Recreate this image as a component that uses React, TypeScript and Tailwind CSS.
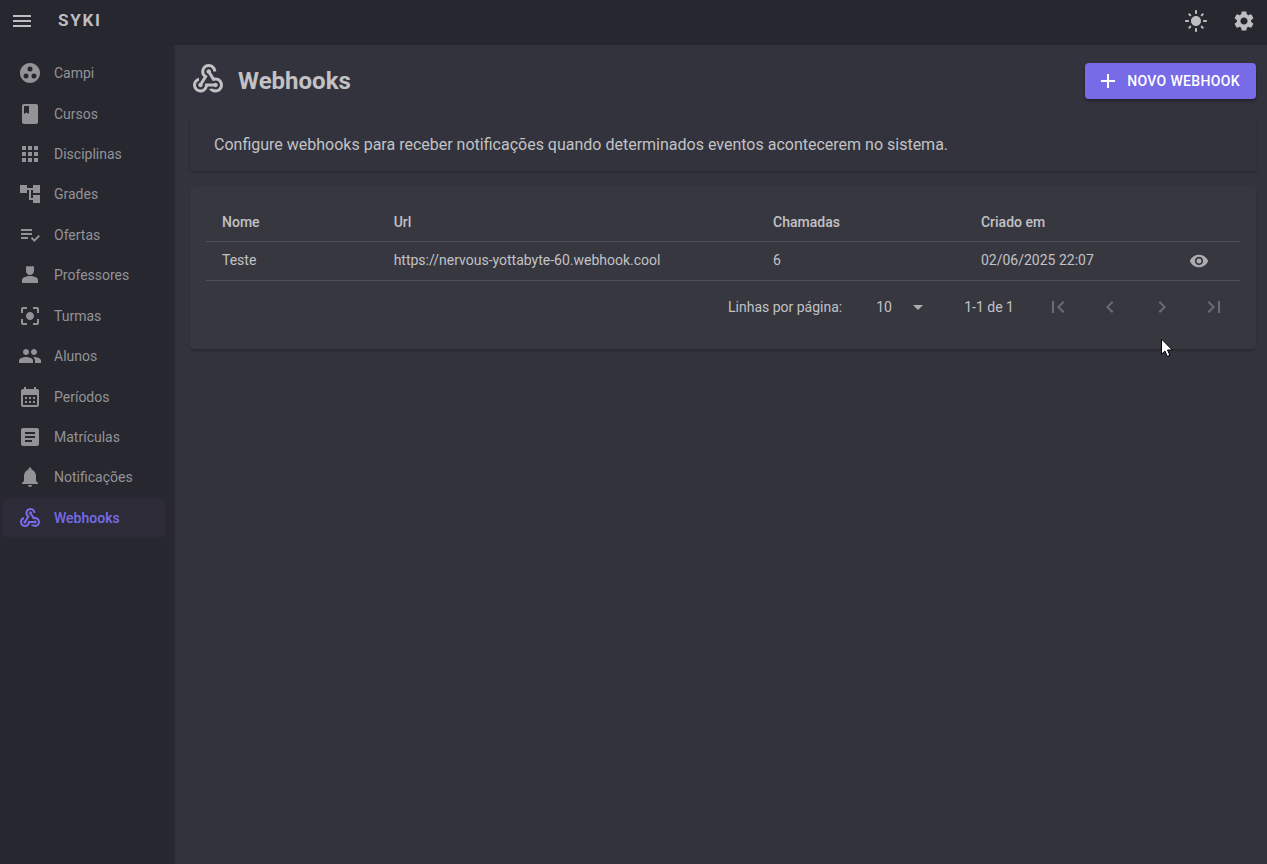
import type { ReactNode } from "react";
import type { IconType } from "react-icons";
import {
  MdAccountTree,
  MdAdd,
  MdApps,
  MdArrowDropDown,
  MdArticle,
  MdBook,
  MdCalendarMonth,
  MdCenterFocusStrong,
  MdChevronLeft,
  MdChevronRight,
  MdFirstPage,
  MdGroupWork,
  MdLastPage,
  MdLightMode,
  MdMenu,
  MdNotifications,
  MdPeople,
  MdPerson4,
  MdPlaylistAddCheck,
  MdSettings,
  MdVisibility,
  MdWebhook,
} from "react-icons/md";

const navItems: { label: string; icon: IconType }[] = [
  { label: "Campi", icon: MdGroupWork },
  { label: "Cursos", icon: MdBook },
  { label: "Disciplinas", icon: MdApps },
  { label: "Grades", icon: MdAccountTree },
  { label: "Ofertas", icon: MdPlaylistAddCheck },
  { label: "Professores", icon: MdPerson4 },
  { label: "Turmas", icon: MdCenterFocusStrong },
  { label: "Alunos", icon: MdPeople },
  { label: "Períodos", icon: MdCalendarMonth },
  { label: "Matrículas", icon: MdArticle },
  { label: "Notificações", icon: MdNotifications },
  { label: "Webhooks", icon: MdWebhook },
];

const activeItem = "Webhooks";

const webhooks = [
  { nome: "Teste", url: "https://nervous-yottabyte-60.webhook.cool", chamadas: 6, criadoEm: "02/06/2025 22:07" },
];

const pagerButtons: { label: string; icon: IconType }[] = [
  { label: "Primeira página", icon: MdFirstPage },
  { label: "Página anterior", icon: MdChevronLeft },
  { label: "Próxima página", icon: MdChevronRight },
  { label: "Última página", icon: MdLastPage },
];

function BarButton({ label, children }: { label: string; children: ReactNode }) {
  return (
    <button type="button" aria-label={label} className="flex size-10 items-center justify-center rounded-full">
      {children}
    </button>
  );
}

function TopBar() {
  return (
    <header className="flex h-[45px] shrink-0 items-center bg-[#27272f] pr-[3px] pb-[3px] pl-0.5 text-[#bebec1]">
      <BarButton label="Menu">
        <MdMenu className="size-6" />
      </BarButton>
      <span className="ml-4 text-[17px] font-bold tracking-widest">SYKI</span>
      <div className="ml-auto flex gap-2">
        <BarButton label="Tema claro">
          <MdLightMode className="size-6" />
        </BarButton>
        <BarButton label="Configurações">
          <MdSettings className="size-6" />
        </BarButton>
      </div>
    </header>
  );
}

function Sidebar() {
  return (
    <nav className="w-[174px] shrink-0 bg-[#27272f] pt-2 pr-2 pl-0.5 shadow-[0_1px_3px_rgba(0,0,0,0.3)]">
      <ul className="grid h-[485px] auto-rows-fr">
        {navItems.map(({ label, icon: Icon }) => (
          <li key={label} className="flex">
            <a
              href="#"
              aria-current={label === activeItem ? "page" : undefined}
              className={
                label === activeItem
                  ? "flex flex-1 items-center gap-3 rounded-md bg-[#2d2b38] px-4 text-sm font-medium text-[#776be7]"
                  : "flex flex-1 items-center gap-3 rounded-md px-4 text-sm text-[#939397]"
              }
            >
              <Icon className="size-6" />
              {label}
            </a>
          </li>
        ))}
      </ul>
    </nav>
  );
}

function WebhookTable() {
  return (
    <section className="mt-4 rounded bg-[#373740] p-4 text-sm shadow-[0_2px_2px_rgba(0,0,0,0.2)]">
      <table className="w-full table-fixed border-collapse text-left">
        <colgroup>
          <col className="w-[16.6%]" />
          <col className="w-[36.7%]" />
          <col className="w-[20.1%]" />
          <col className="w-[20.1%]" />
          <col />
        </colgroup>
        <thead>
          <tr className="h-[38px] border-b border-[#515155]">
            <th className="px-4 font-medium">Nome</th>
            <th className="px-4 font-medium">Url</th>
            <th className="px-4 font-medium">Chamadas</th>
            <th className="px-4 font-medium">Criado em</th>
            <th aria-label="Ações" />
          </tr>
        </thead>
        <tbody>
          {webhooks.map((hook) => (
            <tr key={hook.url} className="h-[39px] border-b border-[#515155]">
              <td className="px-4 pb-0.5">{hook.nome}</td>
              <td className="px-4 pb-0.5">{hook.url}</td>
              <td className="px-4 pb-0.5">{hook.chamadas}</td>
              <td className="px-4 pb-0.5">{hook.criadoEm}</td>
              <td className="px-4">
                <button type="button" aria-label="Visualizar" className="flex text-[#adadb1]">
                  <MdVisibility className="size-5" />
                </button>
              </td>
            </tr>
          ))}
        </tbody>
      </table>
      <div className="flex h-[52px] items-center justify-end pr-0.5">
        <label htmlFor="rows">Linhas por página:</label>
        <div className="ml-8 grid items-center">
          <select id="rows" className="col-start-1 row-start-1 h-8 w-14 appearance-none bg-transparent pl-0.5">
            <option>10</option>
          </select>
          <MdArrowDropDown className="pointer-events-none col-start-1 row-start-1 size-6 justify-self-end text-[#adadb1]" />
        </div>
        <span className="ml-[34px]">1-1 de 1</span>
        <div className="ml-5 flex gap-1 text-[#6b6b71]">
          {pagerButtons.map(({ label, icon: Icon }) => (
            <button key={label} type="button" disabled aria-label={label} className="flex size-12 items-center justify-center">
              <Icon className="size-6" />
            </button>
          ))}
        </div>
      </div>
    </section>
  );
}

function Pointer() {
  return (
    <svg aria-hidden="true" viewBox="0 0 12 19" className="pointer-events-none absolute top-[338px] left-[1161px] h-[19px] w-3">
      <path d="M.5 1v15.3l3.4-3.3 2.4 5.4 2.6-1.1-2.4-5.3h4.8z" fill="#fff" stroke="#000" strokeWidth="1" />
    </svg>
  );
}

export default function App() {
  return (
    <div className="relative flex min-h-screen flex-col bg-[#32333d] font-[Roboto,sans-serif] text-[#c2c2c5]">
      <TopBar />
      <div className="flex flex-1">
        <Sidebar />
        <main className="flex-1 pt-[18px] pr-[11px] pl-4">
          <div className="flex h-9 items-center">
            <MdWebhook className="mb-1 size-9 shrink-0" />
            <h1 className="ml-3 text-2xl font-bold">Webhooks</h1>
            <button
              type="button"
              className="ml-auto flex h-9 items-center gap-[7px] rounded bg-[#776be7] pr-4 pl-[11px] text-sm font-medium tracking-wide text-white shadow-[0_2px_3px_rgba(0,0,0,0.35)]"
            >
              <MdAdd className="size-6" />
              NOVO WEBHOOK
            </button>
          </div>
          <p className="mt-[18px] rounded px-6 pt-4 pb-[14px] text-base shadow-[0_1px_3px_rgba(0,0,0,0.3)]">
            Configure webhooks para receber notificações quando determinados eventos acontecerem no sistema.
          </p>
          <WebhookTable />
        </main>
      </div>
      <Pointer />
    </div>
  );
}
